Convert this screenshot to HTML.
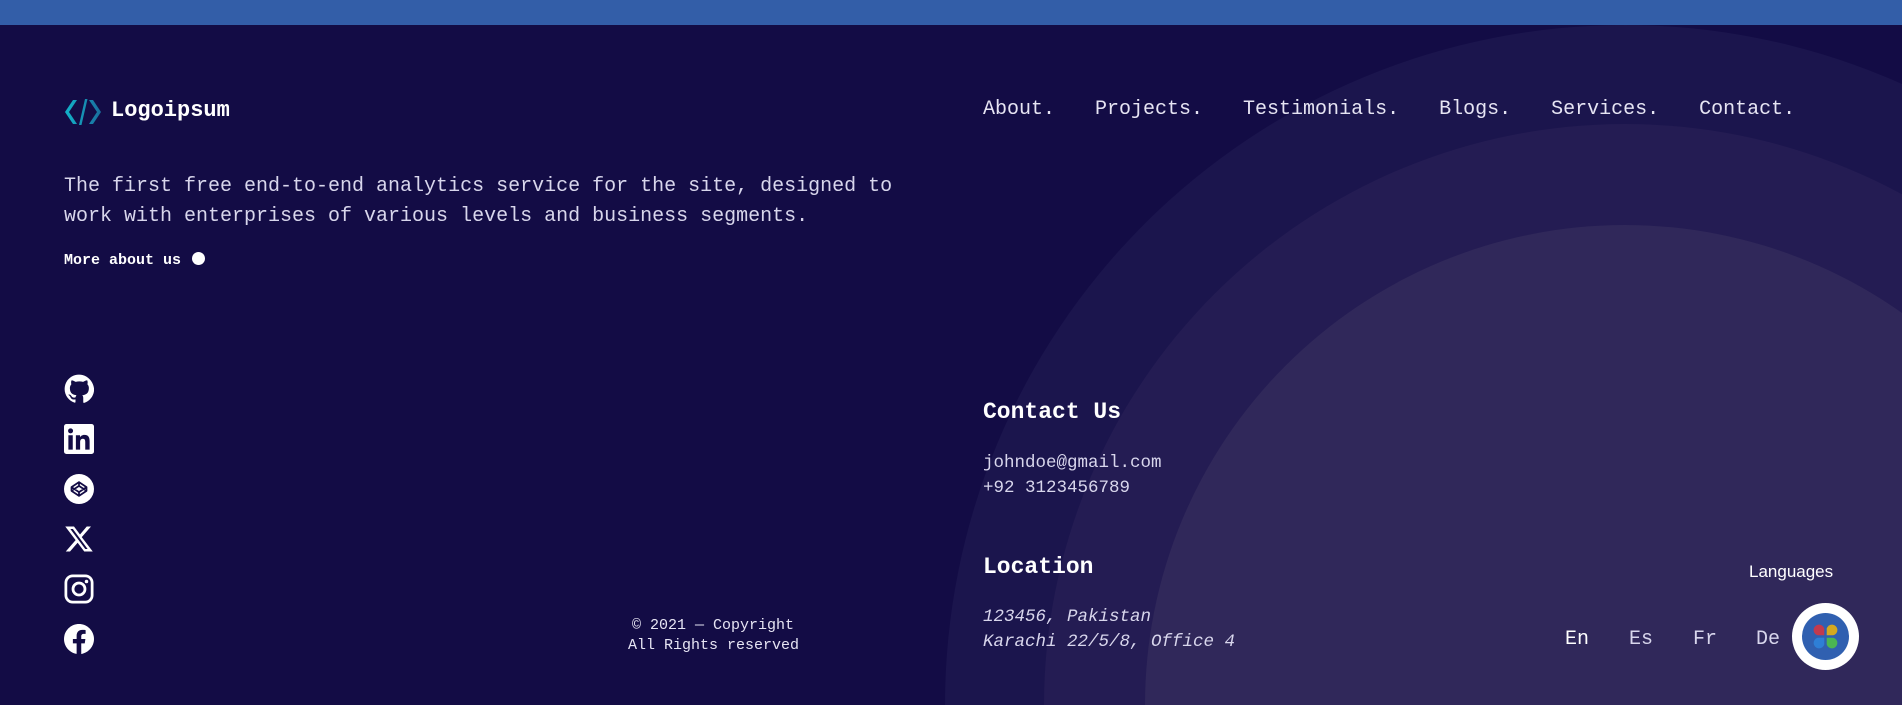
<!DOCTYPE html>
<html style="overflow:hidden;height:705px"><head><meta charset="utf-8"><style>
*{margin:0;padding:0;box-sizing:border-box}
html,body{width:1902px;height:705px;overflow:hidden}
body{background:#130c45;font-family:"Liberation Mono",monospace;color:#e6e4f3}
#w{position:relative;width:1902px;height:705px;overflow:hidden;background:#130c45}
.top{position:absolute;left:0;top:0;width:1902px;height:25px;background:#335ea8}
.c{position:absolute;border-radius:50%}
.a{position:absolute;white-space:nowrap}
</style></head><body><div id="w">
<svg class="a" style="left:0;top:0" width="1902" height="705" viewBox="0 0 1902 705"><circle cx="1625" cy="705" r="680" fill="#1b154d"/><circle cx="1625" cy="705" r="581" fill="#241c53"/><circle cx="1625" cy="705" r="480" fill="#30285a"/></svg>
<div class="top"></div>

<svg class="a" style="left:63px;top:97px" width="40" height="30" viewBox="0 0 40 30"><defs><linearGradient id="g" x1="0" x2="1"><stop offset="0" stop-color="#12b3c9"/><stop offset="1" stop-color="#1a6e9e"/></linearGradient></defs><path d="M10 3 L2 15 L10 27 L14 27 L6 15 L14 3Z M30 3 L38 15 L30 27 L26 27 L34 15 L26 3Z M22 2 L16 28 L18.5 28 L24.5 2Z" fill="url(#g)"/></svg>
<div class="a" style="left:111px;top:98px;font-size:22px;font-weight:bold;color:#fff">Logoipsum</div>
<div class="a" style="left:64px;top:172px;font-size:20px;line-height:30px;color:#d8d6ec">The first free end-to-end analytics service for the site, designed to<br>work with enterprises of various levels and business segments.</div>
<div class="a" style="left:64px;top:252px;font-size:15px;font-weight:bold;color:#fff">More about us <span style="display:inline-block;width:13px;height:13px;border-radius:50%;background:#fff;vertical-align:-1px;margin-left:2px"></span></div>

<div class="a" style="left:983px;top:98px;font-size:20px;color:#e6e4f3">
<span style="margin-right:40px">About.</span><span style="margin-right:40px">Projects.</span><span style="margin-right:40px">Testimonials.</span><span style="margin-right:40px">Blogs.</span><span style="margin-right:40px">Services.</span><span>Contact.</span></div>

<svg class="a" style="left:64px;top:374px" width="30" height="30" viewBox="0 0 24 24"><path fill="#fff" d="M12 .5C5.6.5.5 5.6.5 12c0 5.1 3.3 9.4 7.9 10.9.6.1.8-.2.8-.6v-2c-3.2.7-3.9-1.5-3.9-1.5-.5-1.3-1.3-1.7-1.3-1.7-1-.7.1-.7.1-.7 1.2.1 1.8 1.2 1.8 1.2 1 1.8 2.7 1.3 3.4 1 .1-.8.4-1.3.7-1.6-2.6-.3-5.3-1.3-5.3-5.7 0-1.3.5-2.3 1.2-3.1-.1-.3-.5-1.5.1-3.1 0 0 1-.3 3.3 1.2 1-.3 2-.4 3-.4s2 .1 3 .4c2.3-1.5 3.3-1.2 3.3-1.2.6 1.6.2 2.8.1 3.1.8.8 1.2 1.8 1.2 3.1 0 4.4-2.7 5.4-5.3 5.7.4.4.8 1.1.8 2.2v3.3c0 .3.2.7.8.6 4.6-1.5 7.9-5.8 7.9-10.9C23.5 5.6 18.4.5 12 .5z"/></svg>
<svg class="a" style="left:64px;top:424px" width="30" height="30" viewBox="0 0 24 24"><rect width="24" height="24" rx="2" fill="#fff"/><rect x="3.5" y="9" width="3.5" height="11.5" fill="#130c45"/><circle cx="5.25" cy="5.5" r="2" fill="#130c45"/><path fill="#130c45" d="M9.5 9h3.3v1.6c.5-.9 1.7-1.9 3.5-1.9 3.6 0 4.2 2.4 4.2 5.4v6.4H17v-5.6c0-1.4 0-3.1-1.9-3.1s-2.2 1.5-2.2 3v5.7H9.5z"/></svg>
<svg class="a" style="left:64px;top:474px" width="30" height="30" viewBox="0 0 24 24"><circle cx="12" cy="12" r="12" fill="#fff"/><path fill="none" stroke="#130c45" stroke-width="1.4" stroke-linejoin="round" d="M12 6.5l6 4v3l-6 4-6-4v-3zM6 10.5l6 4 6-4M6 13.5l6-4 6 4M12 6.5v3M12 14.5v3"/></svg>
<svg class="a" style="left:64px;top:524px" width="30" height="30" viewBox="0 0 24 24"><path fill="#fff" d="M18.2 2h3.4l-7.4 8.5L23 22h-6.8l-5.3-7-6.1 7H1.4l7.9-9.1L1 2h7l4.8 6.4zm-1.2 18h1.9L7.1 4H5.1z"/></svg>
<svg class="a" style="left:64px;top:574px" width="30" height="30" viewBox="0 0 24 24"><rect x="1.5" y="1.5" width="21" height="21" rx="5.5" fill="none" stroke="#fff" stroke-width="2.2"/><circle cx="12" cy="12" r="4.8" fill="none" stroke="#fff" stroke-width="2.2"/><circle cx="18" cy="6" r="1.4" fill="#fff"/></svg>
<svg class="a" style="left:64px;top:624px" width="30" height="30" viewBox="0 0 24 24"><path fill="#fff" d="M24 12C24 5.4 18.6 0 12 0S0 5.4 0 12c0 6 4.4 11 10.1 11.9V15.5H7.1V12h3V9.4c0-3 1.8-4.7 4.5-4.7 1.3 0 2.7.2 2.7.2v3h-1.5c-1.5 0-2 .9-2 1.9V12h3.3l-.5 3.5h-2.8V24C19.6 23 24 18 24 12z"/></svg>

<div class="a" style="left:628px;top:616px;width:170px;text-align:center;font-size:15px;line-height:20px;color:#e6e4f3">© 2021 — Copyright<br>All Rights reserved</div>

<div class="a" style="left:983px;top:399px;font-size:23px;font-weight:bold;color:#fff">Contact Us</div>
<div class="a" style="left:983px;top:451px;font-size:17.5px;line-height:25px;color:#d8d6ec">johndoe@gmail.com<br>+92 3123456789</div>
<div class="a" style="left:983px;top:554px;font-size:23px;font-weight:bold;color:#fff">Location</div>
<div class="a" style="left:983px;top:605px;font-size:17.5px;line-height:25px;font-style:italic;color:#d8d6ec">123456, Pakistan<br>Karachi 22/5/8, Office 4</div>

<div class="a" style="left:1749px;top:562px;font-size:17px;color:#fff;font-family:'Liberation Sans',sans-serif">Languages</div>
<div class="a" style="left:1565px;top:628px;font-size:20px;color:#fff">En</div>
<div class="a" style="left:1629px;top:628px;font-size:20px;color:#d8d6ec">Es</div>
<div class="a" style="left:1693px;top:628px;font-size:20px;color:#d8d6ec">Fr</div>
<div class="a" style="left:1756px;top:628px;font-size:20px;color:#d8d6ec">De</div>
<div class="c" style="left:1792px;top:603px;width:67px;height:67px;background:#fff"></div>
<div class="c" style="left:1802px;top:613px;width:47px;height:47px;background:#3060b0"></div>
<svg class="a" style="left:1811px;top:622px" width="29" height="29" viewBox="0 0 24 24"><path fill="#c23a4e" d="M11 11H5.5A4.5 4.5 0 1 1 11 5.5z"/><path fill="#d4a91f" d="M13 11h5.5A4.5 4.5 0 1 0 13 5.5z"/><path fill="#2e7fd6" d="M11 13H5.5A4.5 4.5 0 1 0 11 18.5z"/><path fill="#4bb553" d="M13 13h5.5A4.5 4.5 0 1 1 13 18.5z"/></svg>
</div></body></html>
